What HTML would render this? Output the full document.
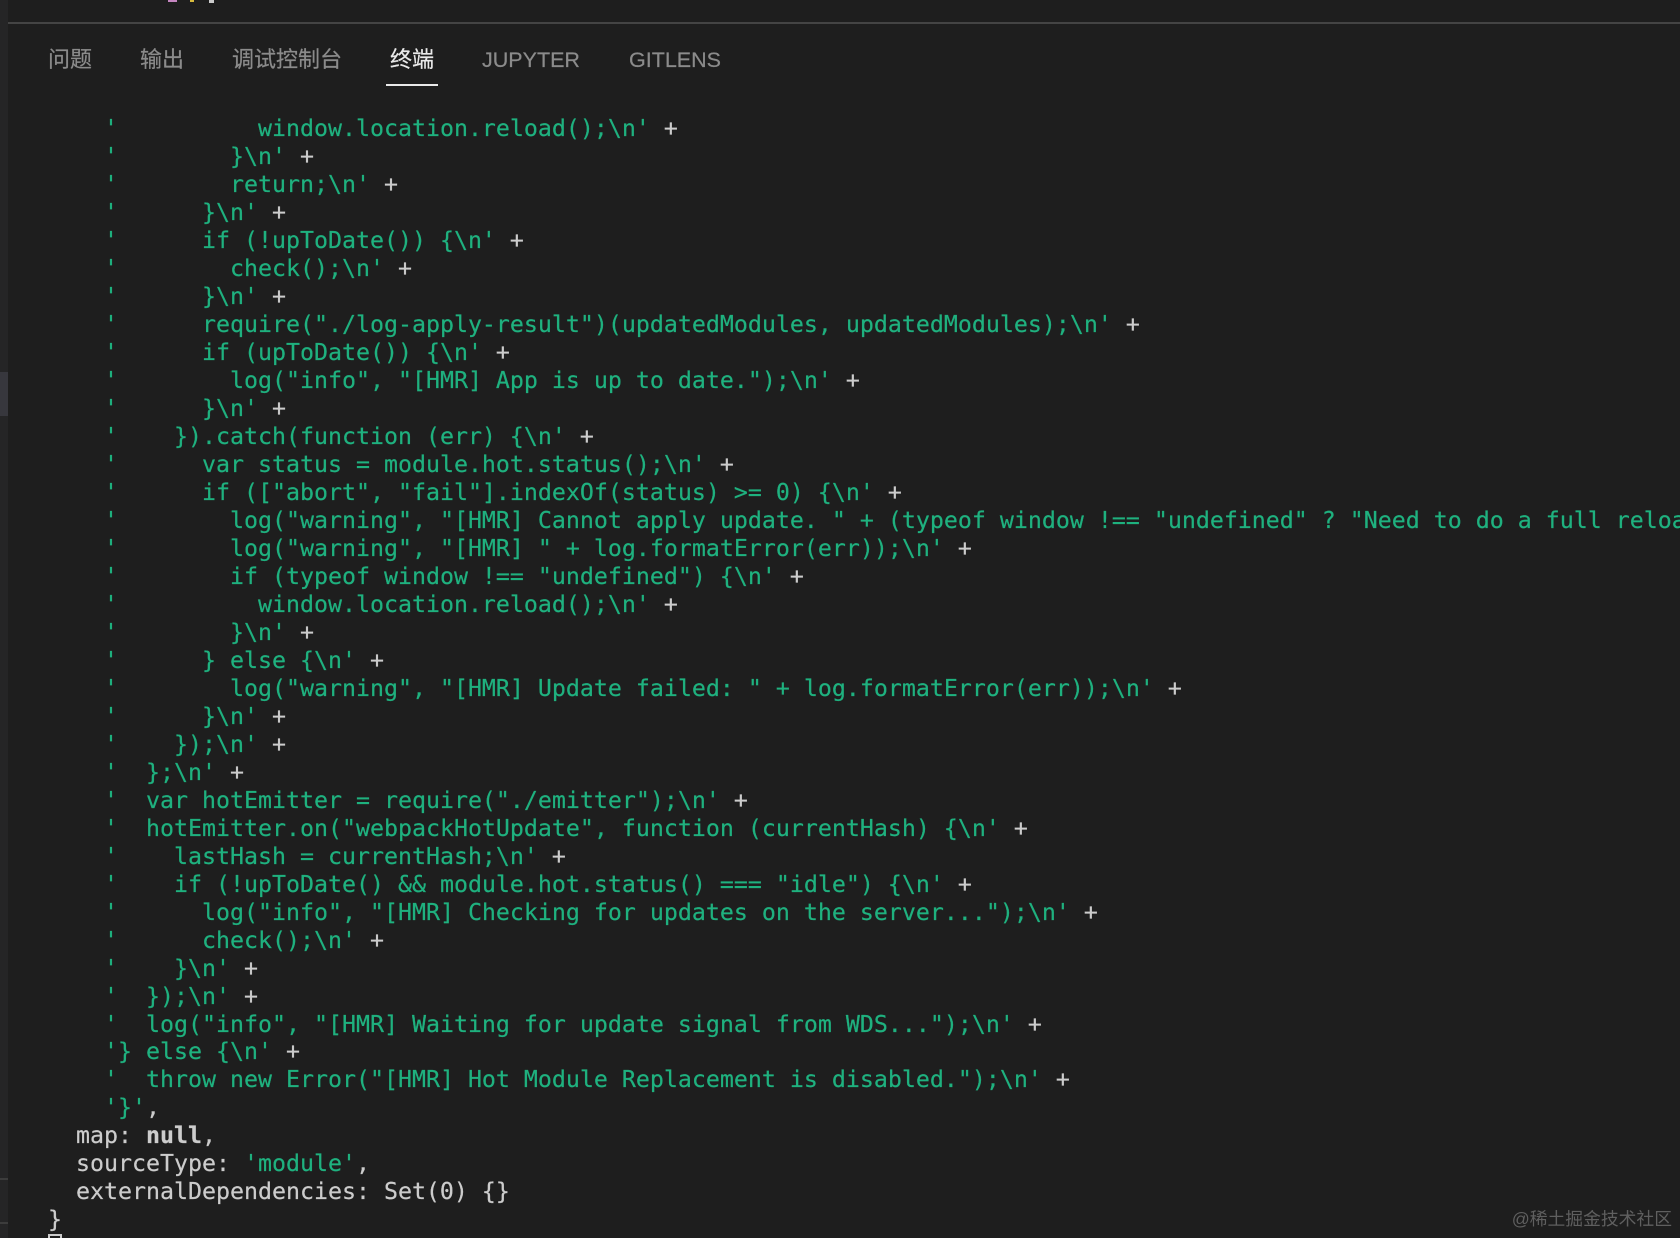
<!DOCTYPE html>
<html lang="zh">
<head>
<meta charset="utf-8">
<title>Terminal</title>
<style>
html,body{margin:0;padding:0;background:#1e1e1e;width:1680px;height:1238px;overflow:hidden;}
#app{position:relative;width:1680px;height:1238px;overflow:hidden;background:#1e1e1e;}
.gut{position:absolute;left:0;top:0;width:8px;height:1238px;background:#252526;}
.thumb{position:absolute;left:0;top:372px;width:8px;height:44px;background:#37373d;}
.gl{position:absolute;left:0;width:8px;height:2px;background:#3c3c3c;}
.rule{position:absolute;left:8px;right:0;top:22px;height:2px;background:#444;}
.bit{position:absolute;top:0;}
.tab{position:absolute;top:46px;line-height:28px;font-size:22px;color:#8b8b8b;font-family:"Liberation Sans","Noto Sans CJK SC",sans-serif;white-space:nowrap;-webkit-text-stroke:.2px currentColor;}
.tab.lat{font-size:21.5px;}
.tab.on{color:#e9e9e9;}
.ul{position:absolute;left:386px;top:84px;width:52px;height:2px;background:#e9e9e9;}
pre{position:absolute;left:48px;top:115px;right:0;margin:0;font:23.26px/27.98px "DejaVu Sans Mono","Liberation Mono",monospace;color:#cccccc;white-space:pre;overflow:hidden;filter:blur(.35px);-webkit-text-stroke:.2px currentColor;}
pre i{font-style:normal;color:#1fb17f;}
pre b{font-weight:bold;}
.cur{position:absolute;left:48px;top:1234px;width:10px;height:8px;border:2px solid #ccc;}
.wm{position:absolute;right:8px;top:1209px;line-height:20px;font-size:17.8px;color:#5f5f5f;font-family:"Liberation Sans","Noto Sans CJK SC",sans-serif;white-space:nowrap;}
</style>
</head>
<body>
<div id="app">
<div class="gut"></div>
<div class="thumb"></div>
<div class="gl" style="top:1178px"></div>
<div class="gl" style="top:1222px"></div>
<div class="bit" style="left:168px;width:9px;height:2px;background:#c586c0"></div>
<div class="bit" style="left:190px;width:4px;height:2px;background:#d7ba3d"></div>
<div class="bit" style="left:209px;width:5px;height:3px;background:#ccc"></div>
<div class="rule"></div>
<div class="tab" style="left:48px">问题</div>
<div class="tab" style="left:140px">输出</div>
<div class="tab" style="left:232px">调试控制台</div>
<div class="tab on" style="left:390px">终端</div>
<div class="tab lat" style="left:482px">JUPYTER</div>
<div class="tab lat" style="left:629px">GITLENS</div>
<div class="ul"></div>
<pre>    <i>'          window.location.reload();\n'</i> +
    <i>'        }\n'</i> +
    <i>'        return;\n'</i> +
    <i>'      }\n'</i> +
    <i>'      if (!upToDate()) {\n'</i> +
    <i>'        check();\n'</i> +
    <i>'      }\n'</i> +
    <i>'      require("./log-apply-result")(updatedModules, updatedModules);\n'</i> +
    <i>'      if (upToDate()) {\n'</i> +
    <i>'        log("info", "[HMR] App is up to date.");\n'</i> +
    <i>'      }\n'</i> +
    <i>'    }).catch(function (err) {\n'</i> +
    <i>'      var status = module.hot.status();\n'</i> +
    <i>'      if (["abort", "fail"].indexOf(status) >= 0) {\n'</i> +
    <i>'        log("warning", "[HMR] Cannot apply update. " + (typeof window !== "undefined" ? "Need to do a full reload!" : "Need to restart!"));\n'</i> +
    <i>'        log("warning", "[HMR] " + log.formatError(err));\n'</i> +
    <i>'        if (typeof window !== "undefined") {\n'</i> +
    <i>'          window.location.reload();\n'</i> +
    <i>'        }\n'</i> +
    <i>'      } else {\n'</i> +
    <i>'        log("warning", "[HMR] Update failed: " + log.formatError(err));\n'</i> +
    <i>'      }\n'</i> +
    <i>'    });\n'</i> +
    <i>'  };\n'</i> +
    <i>'  var hotEmitter = require("./emitter");\n'</i> +
    <i>'  hotEmitter.on("webpackHotUpdate", function (currentHash) {\n'</i> +
    <i>'    lastHash = currentHash;\n'</i> +
    <i>'    if (!upToDate() &amp;&amp; module.hot.status() === "idle") {\n'</i> +
    <i>'      log("info", "[HMR] Checking for updates on the server...");\n'</i> +
    <i>'      check();\n'</i> +
    <i>'    }\n'</i> +
    <i>'  });\n'</i> +
    <i>'  log("info", "[HMR] Waiting for update signal from WDS...");\n'</i> +
    <i>'} else {\n'</i> +
    <i>'  throw new Error("[HMR] Hot Module Replacement is disabled.");\n'</i> +
    <i>'}'</i>,
  map: <b>null</b>,
  sourceType: <i>'module'</i>,
  externalDependencies: Set(0) {}
}</pre>
<div class="cur"></div>
<div class="wm">@稀土掘金技术社区</div>
</div>
</body>
</html>
